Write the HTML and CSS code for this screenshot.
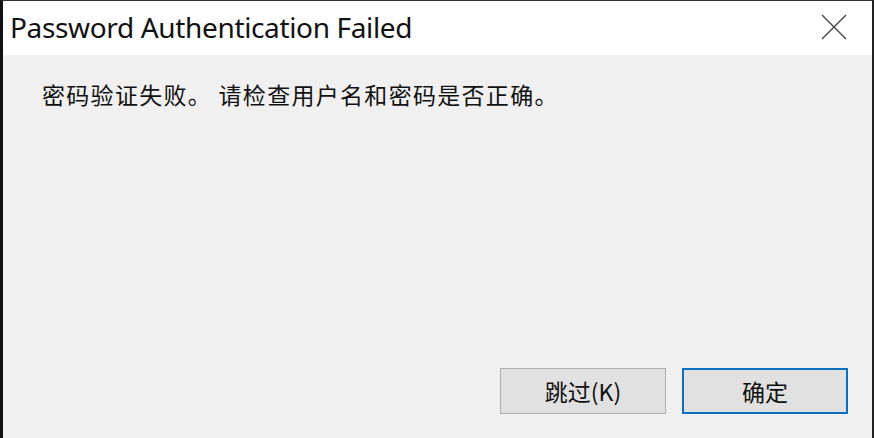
FILE: index.html
```html
<!DOCTYPE html>
<html lang="zh">
<head>
<meta charset="utf-8">
<link rel="stylesheet" href="styles.css">
</head>
<body>
<div class="dialog">
  <div class="titlebar">
    <div class="title">Password Authentication Failed</div>
    <div class="close">
      <svg width="26" height="26" viewBox="0 0 26 26"><path d="M1 1 L25 25 M25 1 L1 25" stroke="#444" stroke-width="1.4" fill="none"/></svg>
    </div>
  </div>
  <div class="body">
    <div class="message">密码验证失败。 请检查用户名和密码是否正确。</div>
    <div class="buttons">
      <button class="btn">跳过(K)</button>
      <button class="btn primary">确定</button>
    </div>
  </div>
</div>
</body>
</html>
```
FILE: styles.css
```css
html, body {
  margin: 0;
  padding: 0;
  width: 874px;
  height: 438px;
  overflow: hidden;
  background: #f0f0f0;
}
.dialog {
  box-sizing: border-box;
  width: 874px;
  height: 438px;
  border-left: 3px solid #111;
  border-right: 2px solid #222;
  border-top: 1px solid #333;
  display: flex;
  flex-direction: column;
  font-family: "Noto Sans", "Noto Sans CJK SC", sans-serif;
  color: #111;
}
.titlebar {
  height: 54px;
  background: #fff;
  display: flex;
  align-items: center;
  justify-content: space-between;
  padding: 0 25px 0 7px;
}
.title {
  font-size: 28px;
  letter-spacing: -0.35px;
  color: #111;
  margin-top: -2px;
}
.close {
  display: flex;
  align-items: center;
  margin-top: -2px;
}
.body {
  flex: 1;
  display: flex;
  flex-direction: column;
  justify-content: space-between;
  padding: 23px 24px 24px 39px;
}
.message {
  font-family: "Noto Sans CJK SC", sans-serif;
  font-size: 23px;
  line-height: 32px;
  color: #111;
  letter-spacing: 1.3px;
}
.buttons {
  display: flex;
  justify-content: flex-end;
  gap: 16px;
}
.btn {
  box-sizing: border-box;
  width: 166px;
  height: 46px;
  background: #e1e1e1;
  border: 1px solid #adadad;
  font-family: "Noto Sans CJK SC", sans-serif;
  font-size: 23px;
  color: #111;
  padding: 0;
}
.btn.primary {
  border: 2px solid #0a6fbf;
}
```
